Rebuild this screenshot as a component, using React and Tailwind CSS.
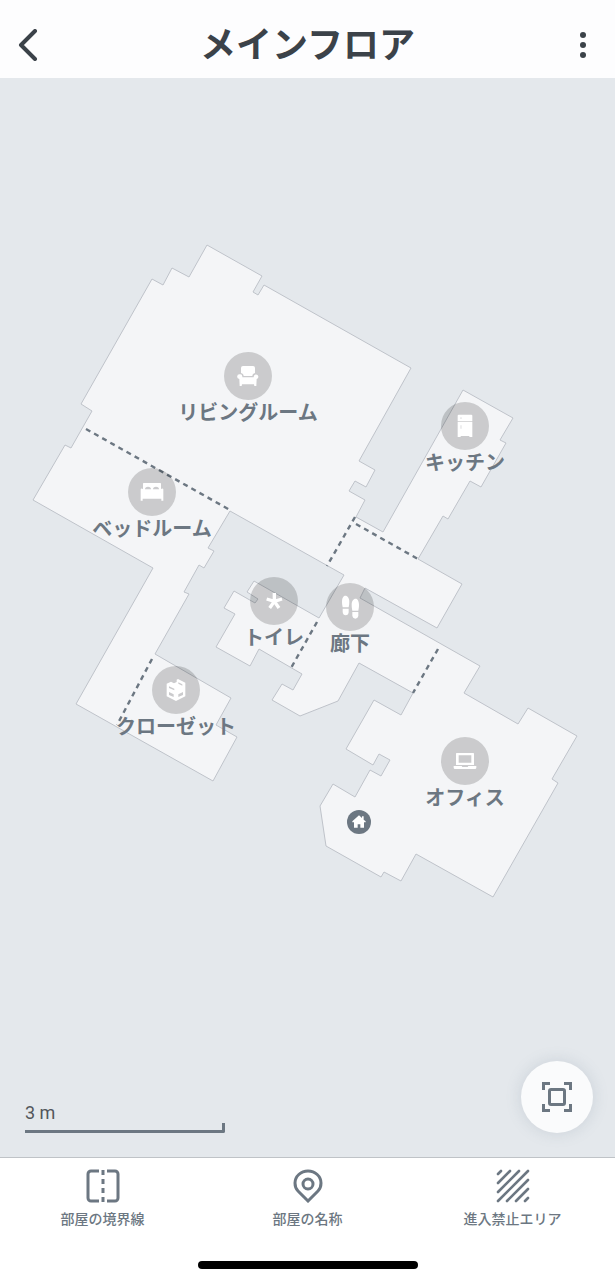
const FLOOR = `
  207,245 189,277 172,268 163,285 152,279 81,404 92,411 71,448 65,445 33,500
  153,568 76,704 213,781 237,737 216,725 231,698 155,654 189,594 184,592 199,565
  204,568 214,551 208,548 230,511 344,575 319,618 254,581 247,592 258,599 255,603
  234,591 224,608 235,614 216,647 250,666 259,649 302,674 293,690 282,684 272,700
  300,716 338,701 359,663 413,693 401,715 374,700 346,749 373,765 379,754 390,760
  381,776 370,770 355,797 333,784 320,806 326,846 381,877 384,872 401,881 416,854
  493,897 558,783 552,779 577,736 528,708 518,724 464,693 480,666 360,598 365,588
  437,628 462,584 418,559 443,516 448,519 470,481 481,487 506,443 500,440 513,418
  463,390 383,532 356,517 365,500 349,491 355,481 366,487 375,470 359,461 411,368
  264,285 258,295 253,292 262,276
`

const DIVIDERS = [
  'M86 429 230 510',
  'M152 659 117 725',
  'M355 517 327 566',
  'M356 524 418 559',
  'M317 622 291 668',
  'M438 649 413 693',
]

// Room glyphs are drawn in a 72 unit box, centre 36,36
function Armchair() {
  return (
    <g fill="#fff">
      <path d="M15 12a6 6 0 0 1 6-6h30a6 6 0 0 1 6 6v15c-5 1-8 5-8 9H23c0-4-3-8-8-9z" />
      <path d="M11 31a7 7 0 0 1 8 7v2h34v-2a7 7 0 1 1 9 7l-1 21h-6l-1-5H18l-1 5h-6l-1-21a7 7 0 0 1 1-14z" />
    </g>
  )
}

function Bed() {
  return (
    <path
      fill="#fff"
      fillRule="evenodd"
      d="M9 11q0-2 2-2h50q2 0 2 2v16q6-4 7 1v34h-6v-6H8v6H2V28q1-5 7-1zM15 28h18c0-5-3-8-9-8s-9 3-9 8zM39 28h18c0-5-3-8-9-8s-9 3-9 8z"
    />
  )
}

function Box() {
  return (
    <path
      fill="#fff"
      fillRule="evenodd"
      d="M8 17l13-6 9 5 8-4V5l4-2 22 11v41L36 69 8 55zM15 25v5l16 7v-5zM15 42v9l14 6v-8zM43 49v8l14-6v-9zM43 13v4l12 6v-4z"
    />
  )
}

function Asterisk() {
  return (
    <path
      d="M37 37V12M37 37 14 30M37 37 60 30M37 37 23 57M37 37 51 57"
      stroke="#fff"
      strokeWidth="10"
      fill="none"
    />
  )
}

function Footprints() {
  return (
    <g fill="#fff">
      <path d="M12 20C12 9 16 2 22 2c7 0 12 8 12 18 0 6-1 12-2 17H14c-1-5-2-11-2-17z" />
      <path d="M14 41h18v10c0 6-4 10-9 10s-9-4-9-10z" />
      <path d="M41 29c0-11 5-18 12-18 6 0 10 8 10 18 0 7-1 12-2 18H43c-1-6-2-11-2-18z" />
      <path d="M43 51h18v10c0 6-4 10-9 10s-9-4-9-10z" />
    </g>
  )
}

function Fridge() {
  return (
    <path
      fill="#fff"
      fillRule="evenodd"
      d="M14 5q0-3 3-3h38q3 0 3 3v17H14zM23 10v5h2v-5zM14 24h44v45h-8l-2-3H24l-2 3h-8zM23 34v10h2V34z"
    />
  )
}

function Laptop() {
  return (
    <path
      fill="#fff"
      fillRule="evenodd"
      d="M9 14q0-2 2-2h50q2 0 2 2v34H9zM17 19v22h38V19zM2 51h24l2 3h16l2-3h24v5q0 4-4 4H6q-4 0-4-4z"
    />
  )
}

const ROOMS = [
  { name: 'リビングルーム', x: 248, y: 376, Icon: Armchair },
  { name: 'キッチン', x: 465, y: 426, Icon: Fridge },
  { name: 'ベッドルーム', x: 152, y: 492, Icon: Bed },
  { name: 'トイレ', x: 274, y: 601, Icon: Asterisk },
  { name: '廊下', x: 350, y: 607, Icon: Footprints },
  { name: 'クローゼット', x: 176, y: 690, Icon: Box },
  { name: 'オフィス', x: 465, y: 761, Icon: Laptop },
]

function FloorMap() {
  return (
    <svg viewBox="0 78 615 1079" className="absolute inset-0 h-full w-full" role="img" aria-label="メインフロア">
      <polygon points={FLOOR} fill="#f4f5f7" stroke="#bfc3ca" strokeWidth="1" />
      {DIVIDERS.map(d => (
        <path key={d} d={d} fill="none" stroke="#6c7782" strokeWidth="2.4" strokeDasharray="5 4.3" />
      ))}

      {ROOMS.map(({ name, x, y, Icon }) => (
        <g key={name}>
          <circle cx={x} cy={y} r="24" fill="#000" fillOpacity="0.17" />
          <svg x={x - 12} y={y - 12} width="24" height="24" viewBox="0 0 72 72">
            <Icon />
          </svg>
          <text x={x} y={y + 44} textAnchor="middle" fill="#6c7782" className="text-[20px] font-bold">
            {name}
          </text>
        </g>
      ))}

      <circle cx="359" cy="822" r="12" fill="#6c7782" />
      <svg x="347" y="810" width="24" height="24" viewBox="0 0 72 72">
        <path d="M36 16 16 34v3h5v16h11V43h8v10h11V37h5v-3l-6-5V19h-5v5z" fill="#fff" />
      </svg>
    </svg>
  )
}

function BorderIcon() {
  return (
    <svg viewBox="0 0 34 34" className="h-[34px] w-[34px]" fill="none" stroke="currentColor" strokeWidth="3">
      <path d="M13 2H5a3 3 0 0 0-3 3v24a3 3 0 0 0 3 3h8M21 2h8a3 3 0 0 1 3 3v24a3 3 0 0 1-3 3h-8" />
      <path d="M17 1v5M17 10v5M17 19v5M17 28v5" />
    </svg>
  )
}

function PinIcon() {
  return (
    <svg viewBox="0 0 34 34" className="h-[34px] w-[34px]" fill="none" stroke="currentColor" strokeWidth="3">
      <path d="M17 32 7 22C4 19 4 17 4 14a13 12 0 0 1 26 0c0 3 0 5-3 8z" />
      <circle cx="17" cy="15" r="5" />
    </svg>
  )
}

function HatchIcon() {
  return (
    <svg viewBox="0 0 34 34" className="h-[34px] w-[34px]" fill="none" stroke="currentColor" strokeWidth="2.6" strokeLinecap="round">
      <path d="M2 5 5 2M2 14 14 2M2 23 23 2M2 32 32 2M11 32 32 11M20 32 32 20M29 32 32 29" />
    </svg>
  )
}

const TABS = [
  { label: '部屋の境界線', Icon: BorderIcon },
  { label: '部屋の名称', Icon: PinIcon },
  { label: '進入禁止エリア', Icon: HatchIcon },
]

export default function App() {
  return (
    <div className="flex min-h-screen flex-col bg-[#e4e8ec] font-['Inter','Noto_Sans_CJK_JP',sans-serif]">
      <header className="flex h-[78px] items-center justify-between bg-[#fdfdfe] px-4 pt-3 text-[#3b4249]">
        <button type="button" aria-label="戻る" className="flex h-8 w-8 items-center">
          <svg viewBox="0 0 24 32" className="h-8 w-6" fill="none" stroke="currentColor" strokeWidth="4" strokeLinecap="round" strokeLinejoin="round">
            <path d="M19 2 5 16l14 14" />
          </svg>
        </button>
        <h1 className="text-[36px] leading-10 font-bold">メインフロア</h1>
        <button type="button" aria-label="メニュー" className="flex h-8 w-8 items-center justify-center">
          <svg viewBox="0 0 8 28" className="h-7 w-2" fill="currentColor">
            <circle cx="4" cy="4" r="3" />
            <circle cx="4" cy="14" r="3" />
            <circle cx="4" cy="24" r="3" />
          </svg>
        </button>
      </header>

      <main className="relative flex min-h-[640px] flex-1 flex-col justify-end">
        <FloorMap />
        <div className="relative flex items-end justify-between pr-[22px] pb-6 pl-[25px]">
          <div className="w-[200px]">
            <div className="font-[Roboto] text-[18px] leading-5 text-[#52565b]">3 m</div>
            <div className="h-[10px] rounded-br-xs border-r-3 border-b-3 border-[#6c7782]" />
          </div>
          <button
            type="button"
            aria-label="全体を表示"
            className="flex h-[72px] w-[72px] items-center justify-center rounded-full bg-[#fafbfc] text-[#6c7782] shadow-[0_0_16px_rgba(100,120,140,0.2)]"
          >
            <svg viewBox="0 0 30 30" className="h-[30px] w-[30px]" fill="none" stroke="currentColor" strokeWidth="3">
              <path d="M1.5 8V1.5H8M22 1.5h6.5V8M28.5 22v6.5H22M8 28.5H1.5V22" />
              <rect x="7.5" y="7.5" width="15" height="15" rx="1.5" />
            </svg>
          </button>
        </div>
      </main>

      <footer className="border-t border-[#bfc3c7] bg-white pb-[11px]">
        <nav className="flex h-[103px] pt-[11px]">
          {TABS.map(({ label, Icon }) => (
            <button key={label} type="button" className="flex flex-1 flex-col items-center gap-1.5 text-[#6c7782]">
              <Icon />
              <span className="text-[14px] leading-5 font-medium">{label}</span>
            </button>
          ))}
        </nav>
        <div className="mx-auto h-2 w-[220px] rounded-full bg-black" />
      </footer>
    </div>
  )
}
